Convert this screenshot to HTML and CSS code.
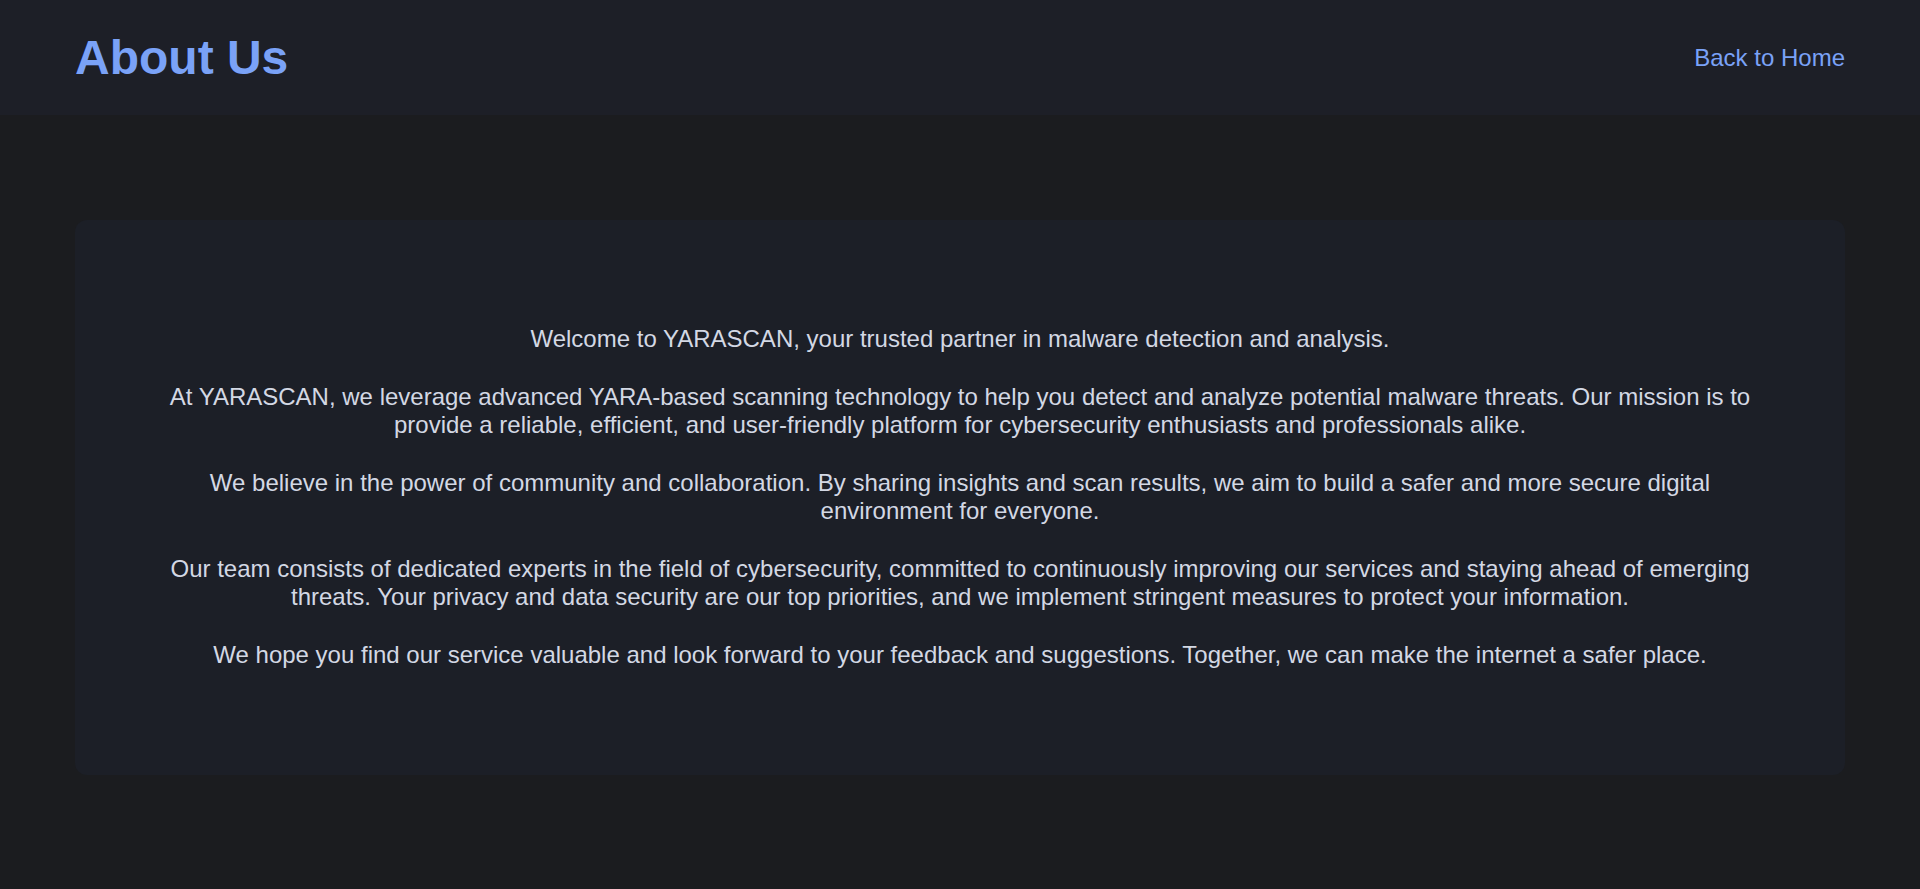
FILE: index.html
```html
<!DOCTYPE html>
<html lang="en">
<head>
<meta charset="utf-8">
<title>About Us - YARASCAN</title>
<link rel="stylesheet" href="styles.css">
</head>
<body>
<header class="site-header">
  <h1 class="page-title">About Us</h1>
  <a class="home-link" href="#">Back to Home</a>
</header>
<main class="content">
  <section class="about-card">
    <p>Welcome to YARASCAN, your trusted partner in malware detection and analysis.</p>
    <p>At YARASCAN, we leverage advanced YARA-based scanning technology to help you detect and analyze potential malware threats. Our mission is to provide a reliable, efficient, and user-friendly platform for cybersecurity enthusiasts and professionals alike.</p>
    <p>We believe in the power of community and collaboration. By sharing insights and scan results, we aim to build a safer and more secure digital environment for everyone.</p>
    <p>Our team consists of dedicated experts in the field of cybersecurity, committed to continuously improving our services and staying ahead of emerging threats. Your privacy and data security are our top priorities, and we implement stringent measures to protect your information.</p>
    <p>We hope you find our service valuable and look forward to your feedback and suggestions. Together, we can make the internet a safer place.</p>
  </section>
</main>
</body>
</html>
```

FILE: styles.css
```css
html, body {
  margin: 0;
  padding: 0;
}

body {
  background: #1b1c1f;
  color: #d3d8e4;
  font-family: "Liberation Sans", Arial, sans-serif;
  font-size: 24px;
  min-height: 889px;
}

.site-header {
  display: flex;
  align-items: center;
  justify-content: space-between;
  height: 115px;
  padding: 0 75px;
  background: #1d1f27;
}

.page-title {
  margin: 0;
  font-size: 48px;
  font-weight: 700;
  color: #7aa2f7;
}

.home-link {
  color: #7aa2f7;
  text-decoration: none;
  font-size: 24px;
}

.content {
  padding: 105px 75px;
}

.about-card {
  background: #1c1f27;
  border-radius: 12px;
  padding: 75px 80px 76px;
  text-align: center;
}

.about-card p {
  margin: 30px 0;
  line-height: 28px;
}
```
